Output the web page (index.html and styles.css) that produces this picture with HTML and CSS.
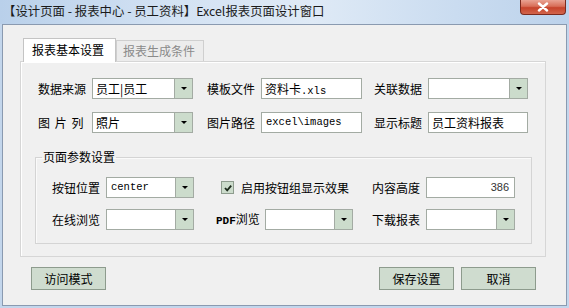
FILE: index.html
```html
<!DOCTYPE html>
<html lang="zh-CN">
<head>
<meta charset="utf-8">
<link rel="stylesheet" href="styles.css">
</head>
<body>
<div class="titlebar">
  <span class="title">【设计页面 - 报表中心 - 员工资料】Excel报表页面设计窗口</span>
  <div class="close"><svg width="14" height="10" viewBox="0 0 14 10"><path d="M3 1.5 L11 8.5 M11 1.5 L3 8.5" stroke="#fff" stroke-width="2.4" stroke-linecap="round"/></svg></div>
</div>
<div class="window">
  <div class="tabs">
    <div class="tab active">报表基本设置</div>
    <div class="tab">报表生成条件</div>
  </div>
  <div class="panel">
    <div class="row r1">
      <span class="lbl">数据来源</span>
      <div class="field select w101"><span class="val">员工|员工</span><span class="arrow"></span></div>
      <span class="lbl m14">模板文件</span>
      <div class="field w101"><span class="val">资料卡<span class="mono">.xls</span></span></div>
      <span class="lbl m12">关联数据</span>
      <div class="field select w100"><span class="val"></span><span class="arrow"></span></div>
    </div>
    <div class="row r2">
      <span class="lbl spaced">图 片 列</span>
      <div class="field select w101"><span class="val">照片</span><span class="arrow"></span></div>
      <span class="lbl m14">图片路径</span>
      <div class="field w101"><span class="val mono">excel\images</span></div>
      <span class="lbl m12">显示标题</span>
      <div class="field w100"><span class="val">员工资料报表</span></div>
    </div>
    <fieldset class="group">
      <legend>页面参数设置</legend>
      <div class="row r3">
        <span class="lbl">按钮位置</span>
        <div class="field select w88"><span class="val mono">center</span><span class="arrow"></span></div>
        <div class="mid check">
          <span class="box"><svg width="10" height="10" viewBox="0 0 10 10"><path d="M2 5 L4.2 7.4 L8.2 2.6" fill="none" stroke="#1c2a1c" stroke-width="1.8"/></svg></span>
          <span>启用按钮组显示效果</span>
        </div>
        <span class="lbl">内容高度</span>
        <div class="field w89"><span class="val num">386</span></div>
      </div>
      <div class="row r4">
        <span class="lbl">在线浏览</span>
        <div class="field select w88"><span class="val"></span><span class="arrow"></span></div>
        <div class="mid">
          <span class="lbl pdf"><span class="pdfm">PDF</span>浏览</span>
          <div class="field select w88"><span class="val"></span><span class="arrow"></span></div>
        </div>
        <span class="lbl">下载报表</span>
        <div class="field select w89"><span class="val"></span><span class="arrow"></span></div>
      </div>
    </fieldset>
  </div>
  <div class="buttons">
    <button class="btn">访问模式</button>
    <div class="spacer"></div>
    <button class="btn">保存设置</button>
    <button class="btn">取消</button>
  </div>
</div>
</body>
</html>
```

FILE: styles.css
```css
* { box-sizing: border-box; }
html, body { margin: 0; padding: 0; }
body {
  width: 569px;
  height: 308px;
  overflow: hidden;
  background: #c3d6ec;
  font-family: "Noto Sans CJK SC", "Noto Sans", sans-serif;
  font-size: 12px;
  color: #000;
}
.titlebar {
  height: 24px;
  display: flex;
  align-items: center;
  padding-left: 3px;
  background: linear-gradient(90deg, #b9d0ea 0%, #d3e2f3 30%, #dfeaf6 55%, #cadcf0 80%, #bcd2eb 100%);
}
.title {
  font-size: 12.4px;
  color: #1a1a1a;
  line-height: 24px;
  margin-top: -2px;
}
.close {
  margin-left: auto;
  margin-right: 3px;
  align-self: flex-start;
  width: 46px;
  height: 15px;
  border: 1px solid #7b2a1e;
  border-top: none;
  border-radius: 0 0 4px 4px;
  background: linear-gradient(180deg, #e9a393 0%, #d86e58 45%, #c6432b 55%, #d2654c 100%);
  display: flex;
  align-items: center;
  justify-content: center;
}
.close svg { display: block; }
.window {
  margin: 0 2px;
  height: 282px;
  border: 1px solid #8a9ab0;
  background: #f0f0f0;
  padding: 13px 20px 0 17px;
}
.tabs {
  display: flex;
  align-items: flex-end;
  padding-left: 3px;
  margin-bottom: -1px;
}
.tab {
  height: 21px;
  margin-bottom: 1px;
  padding: 0 8px 0 6px;
  border: 1px solid #cfcfcf;
  border-bottom: none;
  background: #ececec;
  color: #8a8a8a;
  font-size: 12px;
  line-height: 20px;
  position: relative;
}
.tab.active {
  height: 24px;
  margin-bottom: 0;
  padding: 0 11px 0 8px;
  background: #fff;
  color: #000;
  border-color: #c4c4c4;
  line-height: 21px;
  z-index: 1;
}
.panel {
  width: 526px;
  height: 196px;
  border: 1px solid #d6d6d6;
  box-shadow: inset 1px 1px 0 #fff;
  padding: 16px 0 0 17px;
}
.row {
  display: flex;
  align-items: center;
  height: 21px;
}
.r2 { margin-top: 13px; }
.lbl {
  display: inline-block;
  width: 54px;
  flex: none;
  white-space: nowrap;
  line-height: 21px;
}
.spaced { word-spacing: 2px; }
.m14 { margin-left: 14px; }
.m12 { margin-left: 12px; }
.field {
  flex: none;
  height: 21px;
  border: 1px solid #a3aba3;
  background: #fff;
  display: flex;
  align-items: stretch;
}
.w101 { width: 101px; }
.w100 { width: 100px; }
.w88 { width: 88px; }
.w89 { width: 89px; }
.val {
  flex: 1;
  padding-left: 3px;
  line-height: 19px;
  white-space: nowrap;
  overflow: hidden;
}
.mono {
  font-family: "Liberation Mono", "DejaVu Sans Mono", monospace;
  font-size: 10.5px;
}
.val.mono { padding-left: 4px; }
.num {
  text-align: right;
  padding-right: 5px;
  font-family: "Liberation Sans", "Noto Sans", sans-serif;
  font-size: 11px;
  color: #333;
}
.arrow {
  width: 18px;
  flex: none;
  background: #ccdccc;
  border-left: 1px solid #a3aba3;
  display: flex;
  align-items: center;
  justify-content: center;
}
.arrow::after {
  content: "";
  width: 0;
  height: 0;
  border-left: 3px solid transparent;
  border-right: 3px solid transparent;
  border-top: 3px solid #000;
  margin-top: -1px;
}
.group {
  margin: 17px 0 0 -3px;
  width: 497px;
  border: 1px solid #d4d4d4;
  box-shadow: inset 1px 1px 0 #fafafa;
  padding: 13px 0 13px 16px;
  min-inline-size: 0;
}
.group legend {
  margin-left: -10px;
  padding: 0 1px;
  line-height: 14px;
  font-size: 12px;
}
.r4 { margin-top: 11px; }
.mid {
  width: 137px;
  margin-left: 22px;
  margin-right: 19px;
  display: flex;
  align-items: center;
  flex: none;
}
.check .box {
  width: 13px;
  height: 13px;
  margin-left: 5px;
  margin-right: 7px;
  border: 1px solid #8e9c8e;
  background: #ccdccc;
  display: flex;
  align-items: center;
  justify-content: center;
}
.check .box svg { display: block; }
.check span:last-child { white-space: nowrap; line-height: 21px; }
.pdf { width: 49px; }
.pdfm {
  font-family: "Liberation Mono", monospace;
  font-weight: bold;
  font-size: 11px;
}
.buttons {
  display: flex;
  margin-top: 10px;
  padding-left: 11px;
  padding-right: 10px;
}
.spacer { flex: 1; }
.btn {
  width: 75px;
  height: 23px;
  border: 1px solid #8d9b8d;
  background: #cfdccf;
  font-family: "Noto Sans CJK SC", "Noto Sans", sans-serif;
  font-size: 12px;
  color: #000;
  padding: 0;
  margin: 0;
  line-height: 21px;
}
.btn + .btn { margin-left: 7px; }
```
